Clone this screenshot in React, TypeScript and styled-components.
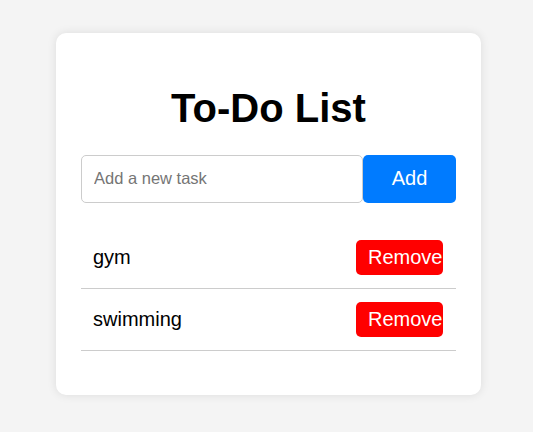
import React, { useState } from "react";
import styled, { createGlobalStyle } from "styled-components";

const GlobalStyle = createGlobalStyle`
  html, body {
    margin: 0;
    padding: 0;
    background: #f4f4f4;
    font-family: "Liberation Sans", Arial, sans-serif;
  }
  * { box-sizing: border-box; }
`;

const Page = styled.div`
  padding: 33px 52px 37px 56px;
`;

const Card = styled.div`
  background: #ffffff;
  border-radius: 10px;
  box-shadow: 0 0 10px rgba(0, 0, 0, 0.1);
  padding: 25px;
  height: 362px;
`;

const Title = styled.h1`
  font-size: 40px;
  font-weight: bold;
  text-align: center;
  color: #000;
  margin: 26.8px 0 24px;
  line-height: 46px;
`;

const Form = styled.div`
  display: flex;
`;

const Input = styled.input`
  flex: 1;
  height: 48px;
  padding: 0 12px;
  font-family: "Liberation Sans", Arial, sans-serif;
  font-size: 16.5px;
  border: 1px solid #ccc;
  border-radius: 5px;
  outline: none;
  color: #000;
  &::placeholder {
    color: #757575;
  }
`;

const AddButton = styled.button`
  width: 93px;
  height: 48px;
  border: none;
  border-radius: 5px;
  background: #007bff;
  color: #fff;
  font-family: "Liberation Sans", Arial, sans-serif;
  font-size: 20px;
  padding: 0;
  cursor: pointer;
`;

const List = styled.ul`
  list-style: none;
  margin: 24px 0 0;
  padding: 0;
`;

const Item = styled.li`
  display: flex;
  align-items: center;
  justify-content: space-between;
  padding: 13px 13px 13px 12px;
  border-bottom: 1px solid #ccc;
  font-size: 20px;
  color: #000;
`;

const RemoveButton = styled.button`
  width: 87px;
  height: 35px;
  border: none;
  border-radius: 5px;
  background: #ff0000;
  color: #fff;
  font-family: "Liberation Sans", Arial, sans-serif;
  font-size: 20px;
  padding: 0 0 0 12px;
  text-align: left;
  white-space: nowrap;
  overflow: hidden;
  cursor: pointer;
`;

export default function App() {
  const [tasks, setTasks] = useState<string[]>(["gym", "swimming"]);
  const [value, setValue] = useState("");

  const add = () => {
    if (!value.trim()) return;
    setTasks([...tasks, value.trim()]);
    setValue("");
  };

  return (
    <>
      <GlobalStyle />
      <Page>
        <Card>
          <Title>To-Do List</Title>
          <Form>
            <Input
              placeholder="Add a new task"
              value={value}
              onChange={(e) => setValue(e.target.value)}
            />
            <AddButton onClick={add}>Add</AddButton>
          </Form>
          <List>
            {tasks.map((t, i) => (
              <Item key={i}>
                <span>{t}</span>
                <RemoveButton onClick={() => setTasks(tasks.filter((_, j) => j !== i))}>
                  Remove
                </RemoveButton>
              </Item>
            ))}
          </List>
        </Card>
      </Page>
    </>
  );
}
